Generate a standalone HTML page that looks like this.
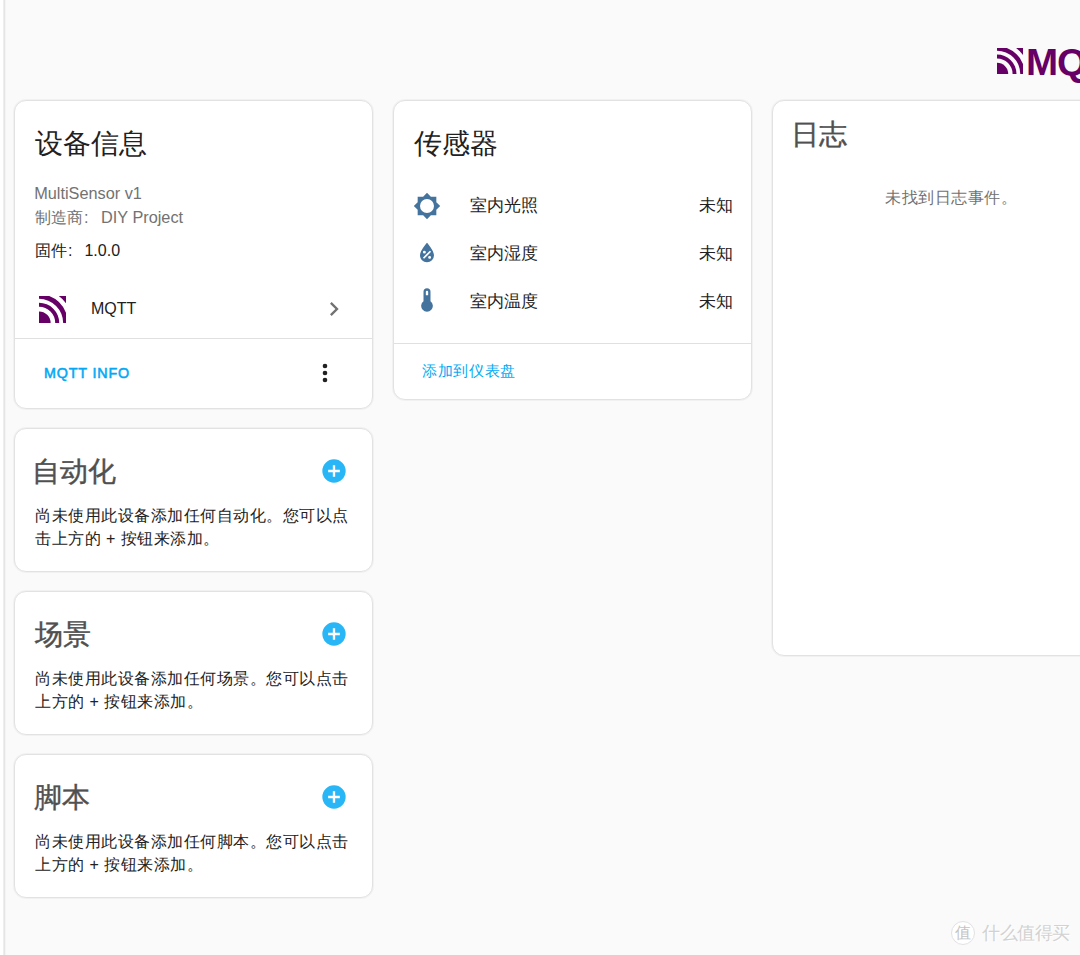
<!DOCTYPE html>
<html><head><meta charset="utf-8">
<style>
*{margin:0;padding:0;box-sizing:border-box}
html,body{width:1080px;height:955px;overflow:hidden;background:#fafafa;font-family:"Liberation Sans",sans-serif;color:#212121}
.vl{position:absolute;left:0;top:0;width:6px;height:955px;background:linear-gradient(to right,#fff 0,#fff 3px,#eee 3px,#eee 4px,#e5e5e5 4px,#e5e5e5 5px,#f4f4f4 5px,#f4f4f4 6px)}
.card{position:absolute;background:#fff;border:1px solid #e2e2e2;border-radius:12px;overflow:hidden;box-shadow:0 0 0 1px rgba(0,0,0,0.035)}
.t{position:absolute;white-space:nowrap;line-height:1}
.title{font-size:28px;color:#212121}
.sec{font-size:16.3px;color:#727272}
.body{font-size:16px;color:#212121}
.cj{font-size:16.5px;color:#212121}
.hr{position:absolute;left:0;right:0;height:1px;background:#e0e0e0}
svg{position:absolute;display:block}
</style></head><body>
<div class="vl"></div>

<!-- MQTT logo top right -->
<svg style="left:997px;top:48.3px" width="26" height="26" viewBox="0 0 100 100">
  <g fill="#660066">
    <path d="M0,57 A43,43 0 0 1 43,100 L0,100 Z"/>
    <path d="M0,25 A75,75 0 0 1 75,100 L60,100 A60,60 0 0 0 0,40 Z"/>
    <path d="M0,0 L38.07,0 A107,107 0 0 1 100,61.93 L100,100 L89.5,100 A89.5,89.5 0 0 0 0,10.5 Z"/>
    <path d="M73.32,0 L100,0 L100,26.68 A124,124 0 0 0 73.32,0 Z"/>
  </g>
</svg>
<div class="t" style="left:1026px;top:44.5px;font-size:36px;font-weight:bold;color:#660066;letter-spacing:-1px;transform:scaleX(1.07);transform-origin:0 0">MQTT</div>

<!-- Card 1: device info -->
<div class="card" style="left:14px;top:100px;width:359px;height:309px">
  <div class="t title" style="left:20px;top:29px">设备信息</div>
  <div class="t sec" style="left:19.2px;top:83.7px">MultiSensor v1</div>
  <div class="t sec" style="left:20px;top:108px">制造商<span style="margin:0 12.5px 0 1px">:</span>DIY Project</div>
  <div class="t body" style="left:20px;top:142px">固件<span style="margin:0 12px 0 1px">:</span>1.0.0</div>
  <svg style="left:24px;top:194.6px" width="27" height="27" viewBox="0 0 100 100">
    <g fill="#660066">
      <path d="M0,57 A43,43 0 0 1 43,100 L0,100 Z"/>
      <path d="M0,25 A75,75 0 0 1 75,100 L60,100 A60,60 0 0 0 0,40 Z"/>
      <path d="M0,0 L38.07,0 A107,107 0 0 1 100,61.93 L100,100 L89.5,100 A89.5,89.5 0 0 0 0,10.5 Z"/>
      <path d="M73.32,0 L100,0 L100,26.68 A124,124 0 0 0 73.32,0 Z"/>
    </g>
  </svg>
  <div class="t body" style="left:76px;top:200px">MQTT</div>
  <svg style="left:305px;top:194px" width="28" height="28" viewBox="0 0 24 24"><path fill="#727272" d="M8.59,16.58L13.17,12L8.59,7.41L10,6L16,12L10,18L8.59,16.58Z"/></svg>
  <div class="hr" style="top:237px"></div>
  <div class="t" style="left:29px;top:265px;font-size:14.3px;color:#03a9f4;letter-spacing:0.85px;-webkit-text-stroke:0.55px #03a9f4">MQTT INFO</div>
  <svg style="left:296px;top:258.2px" width="28" height="28" viewBox="0 0 24 24"><path fill="#212121" d="M12,16A2,2 0 0,1 14,18A2,2 0 0,1 12,20A2,2 0 0,1 10,18A2,2 0 0,1 12,16M12,10A2,2 0 0,1 14,12A2,2 0 0,1 12,14A2,2 0 0,1 10,12A2,2 0 0,1 12,10M12,4A2,2 0 0,1 14,6A2,2 0 0,1 12,8A2,2 0 0,1 10,6A2,2 0 0,1 12,4Z"/></svg>
</div>

<!-- Card 2: sensors -->
<div class="card" style="left:393px;top:100px;width:359px;height:300px">
  <div class="t title" style="left:20px;top:29px">传感器</div>
  <svg style="left:19px;top:91px" width="28" height="28" viewBox="0 0 24 24"><path fill="#44739e" fill-rule="evenodd" d="M12,18A6,6 0 0,1 6,12A6,6 0 0,1 12,6A6,6 0 0,1 18,12A6,6 0 0,1 12,18M20,15.31L23.31,12L20,8.69V4H15.31L12,0.69L8.69,4H4V8.69L0.69,12L4,15.31V20H8.69L12,23.31L15.31,20H20V15.31Z"/></svg>
  <div class="t cj" style="left:76px;top:96px">室内光照</div>
  <div class="t cj" style="right:18.5px;top:96px">未知</div>
  <svg style="left:18.5px;top:138px" width="28" height="28" viewBox="0 0 24 24"><path fill="#44739e" d="M12,3.25C12,3.25 6,10 6,14C6,17.32 8.69,20 12,20A6,6 0 0,0 18,14C18,10 12,3.25 12,3.25M14.47,9.97L15.53,11.03L9.53,17.03L8.47,15.97M9.75,10A1.25,1.25 0 0,1 11,11.25A1.25,1.25 0 0,1 9.75,12.5A1.25,1.25 0 0,1 8.5,11.25A1.25,1.25 0 0,1 9.75,10M14.25,14.5A1.25,1.25 0 0,1 15.5,15.75A1.25,1.25 0 0,1 14.25,17A1.25,1.25 0 0,1 13,15.75A1.25,1.25 0 0,1 14.25,14.5Z"/></svg>
  <div class="t cj" style="left:76px;top:144px">室内湿度</div>
  <div class="t cj" style="right:18.5px;top:144px">未知</div>
  <svg style="left:18.6px;top:185.4px" width="28" height="28" viewBox="0 0 24 24"><path fill="#44739e" d="M15,13V5A3,3 0 0,0 9,5V13A5,5 0 1,0 15,13M12,4A1,1 0 0,1 13,5V8H11V5A1,1 0 0,1 12,4Z"/></svg>
  <div class="t cj" style="left:76px;top:191.5px">室内温度</div>
  <div class="t cj" style="right:18.5px;top:191.5px">未知</div>
  <div class="hr" style="top:242px"></div>
  <div class="t" style="left:28.2px;top:263px;font-size:14.5px;color:#03a9f4;letter-spacing:0.6px">添加到仪表盘</div>
</div>

<!-- Card 3: logbook -->
<div class="card" style="left:772px;top:100px;width:359px;height:556px">
  <div class="t title" style="left:18px;top:20px;color:#505050;-webkit-text-stroke:0.4px #505050">日志</div>
  <div class="t sec" style="left:112px;top:89px;font-size:16px;letter-spacing:0.55px">未找到日志事件。</div>
</div>

<!-- Automations -->
<div class="card" style="left:14px;top:428px;width:359px;height:144px">
  <div class="t title" style="left:17px;top:28.5px;color:#505050;-webkit-text-stroke:0.4px #505050">自动化</div>
  <svg style="left:305px;top:28.1px" width="28" height="28" viewBox="0 0 24 24"><path fill="#29b6f6" d="M17,13H13V17H11V13H7V11H11V7H13V11H17M12,2A10,10 0 0,0 2,12A10,10 0 0,0 12,22A10,10 0 0,0 12,2Z"/></svg>
  <div class="t cj" style="left:20px;top:74.8px;line-height:23.5px;font-size:16px;letter-spacing:0.5px">尚未使用此设备添加任何自动化。您可以点<br>击上方的 + 按钮来添加。</div>
</div>
<div class="card" style="left:14px;top:591px;width:359px;height:144px">
  <div class="t title" style="left:20px;top:28.5px;color:#505050;-webkit-text-stroke:0.4px #505050">场景</div>
  <svg style="left:305px;top:28.1px" width="28" height="28" viewBox="0 0 24 24"><path fill="#29b6f6" d="M17,13H13V17H11V13H7V11H11V7H13V11H17M12,2A10,10 0 0,0 2,12A10,10 0 0,0 12,22A10,10 0 0,0 12,2Z"/></svg>
  <div class="t cj" style="left:20px;top:74.8px;line-height:23.5px;font-size:16px;letter-spacing:0.5px">尚未使用此设备添加任何场景。您可以点击<br>上方的 + 按钮来添加。</div>
</div>
<div class="card" style="left:14px;top:754px;width:359px;height:144px">
  <div class="t title" style="left:19px;top:28.5px;color:#505050;-webkit-text-stroke:0.4px #505050">脚本</div>
  <svg style="left:305px;top:28.1px" width="28" height="28" viewBox="0 0 24 24"><path fill="#29b6f6" d="M17,13H13V17H11V13H7V11H11V7H13V11H17M12,2A10,10 0 0,0 2,12A10,10 0 0,0 12,22A10,10 0 0,0 12,2Z"/></svg>
  <div class="t cj" style="left:20px;top:74.8px;line-height:23.5px;font-size:16px;letter-spacing:0.5px">尚未使用此设备添加任何脚本。您可以点击<br>上方的 + 按钮来添加。</div>
</div>

<!-- watermark -->
<div class="t" style="left:951px;top:920.5px;width:24px;height:24px;border-radius:50%;background:#fff;border:1px solid #e2e2e2;font-size:16px;line-height:22px;text-align:center;color:#c4c4c4;text-shadow:1px 1px 0 #fff">值</div>
<div class="t" style="left:982px;top:924px;font-size:18px;color:#d2d2d2;text-shadow:1px 1px 0 #fff;letter-spacing:-0.4px">什么值得买</div>
</body></html>
